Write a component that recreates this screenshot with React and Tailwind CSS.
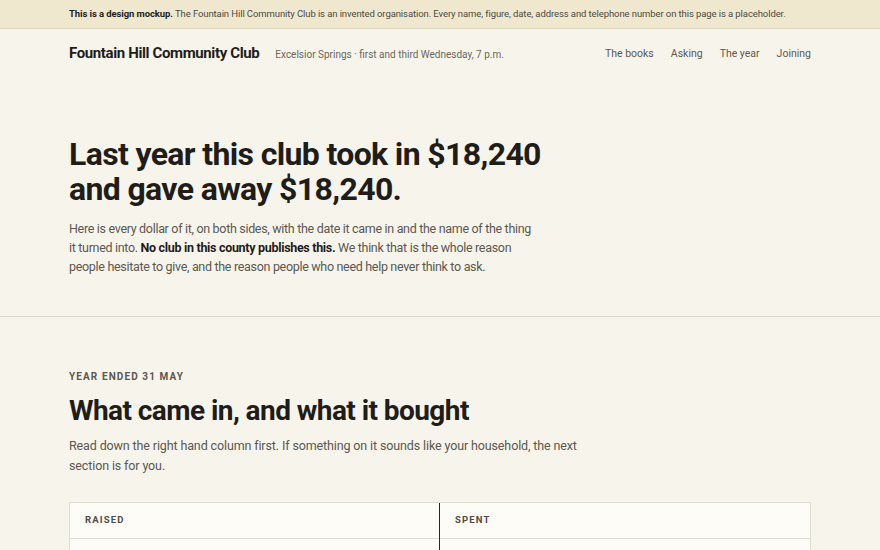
export default function App() {
  const font = { fontFamily: 'Roboto, "Noto Sans", sans-serif' };
  return (
    <div className="min-h-screen bg-[#f7f4ec] text-[#1f1d1a]" style={font}>
      <div className="bg-[#efe8cf] border-b border-[#ddd6bf]">
        <div className="px-[69px] h-[28px] flex items-center text-[9.5px] tracking-[-0.01em] text-[#4d4a3f] whitespace-nowrap">
          <p><span className="font-bold text-[#1f1d1a]">This is a design mockup.</span> The Fountain Hill Community Club is an invented organisation. Every name, figure, date, address and telephone number on this page is a placeholder.</p>
        </div>
      </div>
      <header className="px-[69px] flex items-center justify-between h-[48px]">
        <div className="flex items-baseline gap-[16px]">
          <span className="text-[15px] font-bold tracking-[-0.025em]">Fountain Hill Community Club</span>
          <span className="text-[10px] text-[#6b675d]">Excelsior Springs · first and third Wednesday, 7 p.m.</span>
        </div>
        <nav className="flex gap-[17px] text-[10.5px] text-[#5d5a52] pt-[1px]">
          <a>The books</a>
          <a>Asking</a>
          <a>The year</a>
          <a>Joining</a>
        </nav>
      </header>
      <section className="px-[69px] pt-[60px] pb-[40px] border-b border-[#dcd8cc]">
        <h1 className="text-[32px] leading-[35px] font-bold tracking-[-0.02em] max-w-[520px]">Last year this club took in $18,240 and gave away $18,240.</h1>
        <p className="mt-[12px] text-[12.5px] leading-[19px] tracking-[-0.025em] text-[#5b5850] max-w-[465px]">Here is every dollar of it, on both sides, with the date it came in and the name of the thing it turned into. <strong className="font-bold text-[#1f1d1a]">No club in this county publishes this.</strong> We think that is the whole reason people hesitate to give, and the reason people who need help never think to ask.</p>
      </section>
      <section className="px-[69px] pt-[52px]">
        <p className="text-[10px] font-bold tracking-[0.11em] text-[#5b5850]">YEAR ENDED 31 MAY</p>
        <h2 className="mt-[11px] text-[28px] leading-[32px] font-bold tracking-[-0.02em]">What came in, and what it bought</h2>
        <p className="mt-[9px] text-[12.5px] leading-[20px] tracking-[-0.01em] text-[#5b5850] max-w-[512px]">Read down the right hand column first. If something on it sounds like your household, the next section is for you.</p>
        <div className="mt-[26px] grid grid-cols-2 border border-[#e0ddd3] bg-[#fdfcf7]">
          <div className="border-r border-[#2a2824]">
            <div className="h-[36px] flex items-center px-[15px] text-[9.5px] font-bold tracking-[0.12em] text-[#4f4c45] border-b border-[#e0ddd3]">RAISED</div>
            <div className="h-[40px]"></div>
          </div>
          <div>
            <div className="h-[36px] flex items-center px-[15px] text-[9.5px] font-bold tracking-[0.12em] text-[#4f4c45] border-b border-[#e0ddd3]">SPENT</div>
            <div className="h-[40px]"></div>
          </div>
        </div>
      </section>
    </div>
  );
}
